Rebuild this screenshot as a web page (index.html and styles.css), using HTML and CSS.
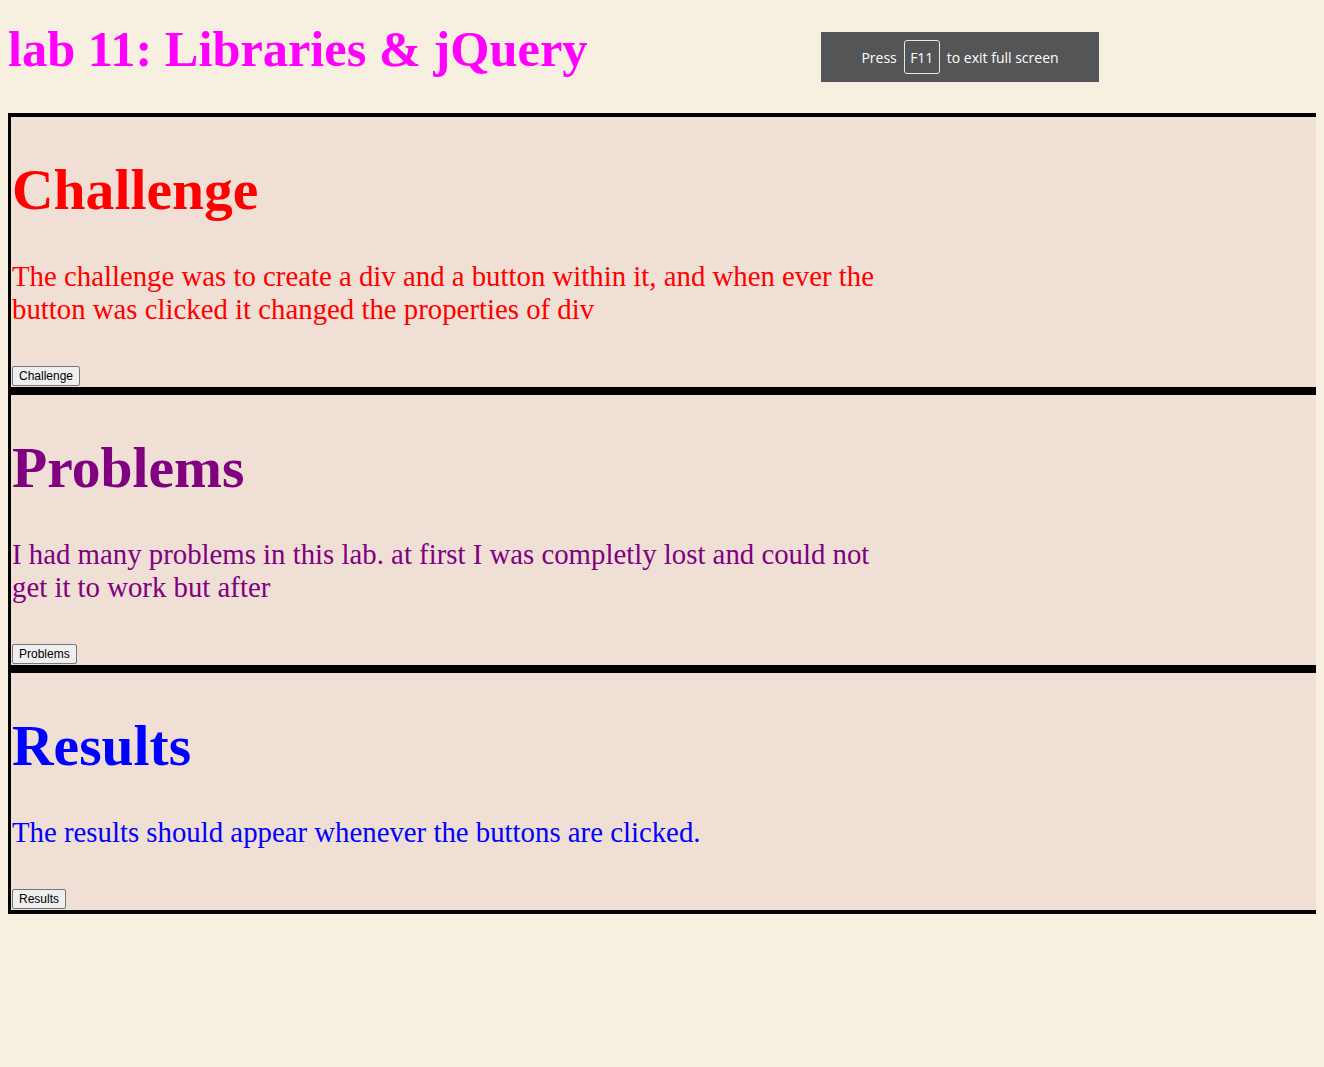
FILE: index.html
```html
<!DOCTYPE html>
<html lang="en">
<head>
<meta charset="utf-8">
<title>lab 11: Libraries &amp; jQuery</title>
<link rel="stylesheet" href="styles.css">
</head>
<body>
<h1 class="title">lab 11: Libraries &amp; jQuery</h1>

<div class="box challenge">
  <h2 class="box-head">Challenge</h2>
  <p class="box-text">The challenge was to create a div and a button within it, and when ever the button was clicked it changed the properties of div</p>
  <button class="box-btn" type="button">Challenge</button>
</div>

<div class="box problems">
  <h2 class="box-head">Problems</h2>
  <p class="box-text">I had many problems in this lab. at first I was completly lost and could not get it to work but after</p>
  <button class="box-btn" type="button">Problems</button>
</div>

<div class="box results">
  <h2 class="box-head">Results</h2>
  <p class="box-text">The results should appear whenever the buttons are clicked.</p>
  <button class="box-btn" type="button">Results</button>
</div>

<div class="fs-notice">
  <span class="fs-word">Press</span>
  <span class="fs-key">F11</span>
  <span class="fs-word">to exit full screen</span>
</div>
</body>
</html>
```

FILE: styles.css
```css
html {
  background: #f7efe0;
  overflow-x: hidden;
}

body {
  margin: 0 8px 8px 8px;
  padding-top: 1px;
  background: #f7efe0;
  font-family: "Liberation Serif", "Times New Roman", serif;
  font-size: 16px;
}

.title {
  margin: 19px 0 35px 0;
  font-size: 50.4px;
  font-weight: bold;
  color: #ff00ff;
  line-height: normal;
}

.box {
  box-sizing: border-box;
  width: calc(100vw - 7px);
  margin: 0 0 0 -1px;
  background: #f0dfd4;
  border: 4px solid #000;
  border-right: none;
  padding: 0 0 0 1px;
}

.box-head {
  margin: 39.5px 0 38px 0;
  font-size: 57.6px;
  font-weight: bold;
  line-height: normal;
}

.box-text {
  margin: 0 0 40px 0;
  max-width: 880px;
  font-size: 28.8px;
  line-height: normal;
}

.box-btn {
  display: block;
  margin: 0 0 1.5px 0;
  padding: 1px 6px;
  font-family: "Liberation Sans", Arial, sans-serif;
  font-size: 12px;
  color: #000;
  background: #efefef;
  border: 1px solid #767676;
  border-radius: 2px;
  height: 20px;
  line-height: 14px;
}

.challenge { color: #ff0000; }
.problems { color: #800080; }
.results { color: #0000ff; }

.fs-notice {
  position: absolute;
  left: 821px;
  top: 32px;
  width: 278px;
  height: 50px;
  background: #545556;
  display: flex;
  align-items: center;
  justify-content: center;
  gap: 7px;
  font-family: "Open Sans", "Noto Sans", sans-serif;
  font-size: 14px;
  color: #ffffff;
}

.fs-key {
  display: flex;
  align-items: center;
  justify-content: center;
  box-sizing: border-box;
  width: 36px;
  height: 34px;
  border: 1px solid #e6e6e6;
  border-radius: 3px;
}
```
